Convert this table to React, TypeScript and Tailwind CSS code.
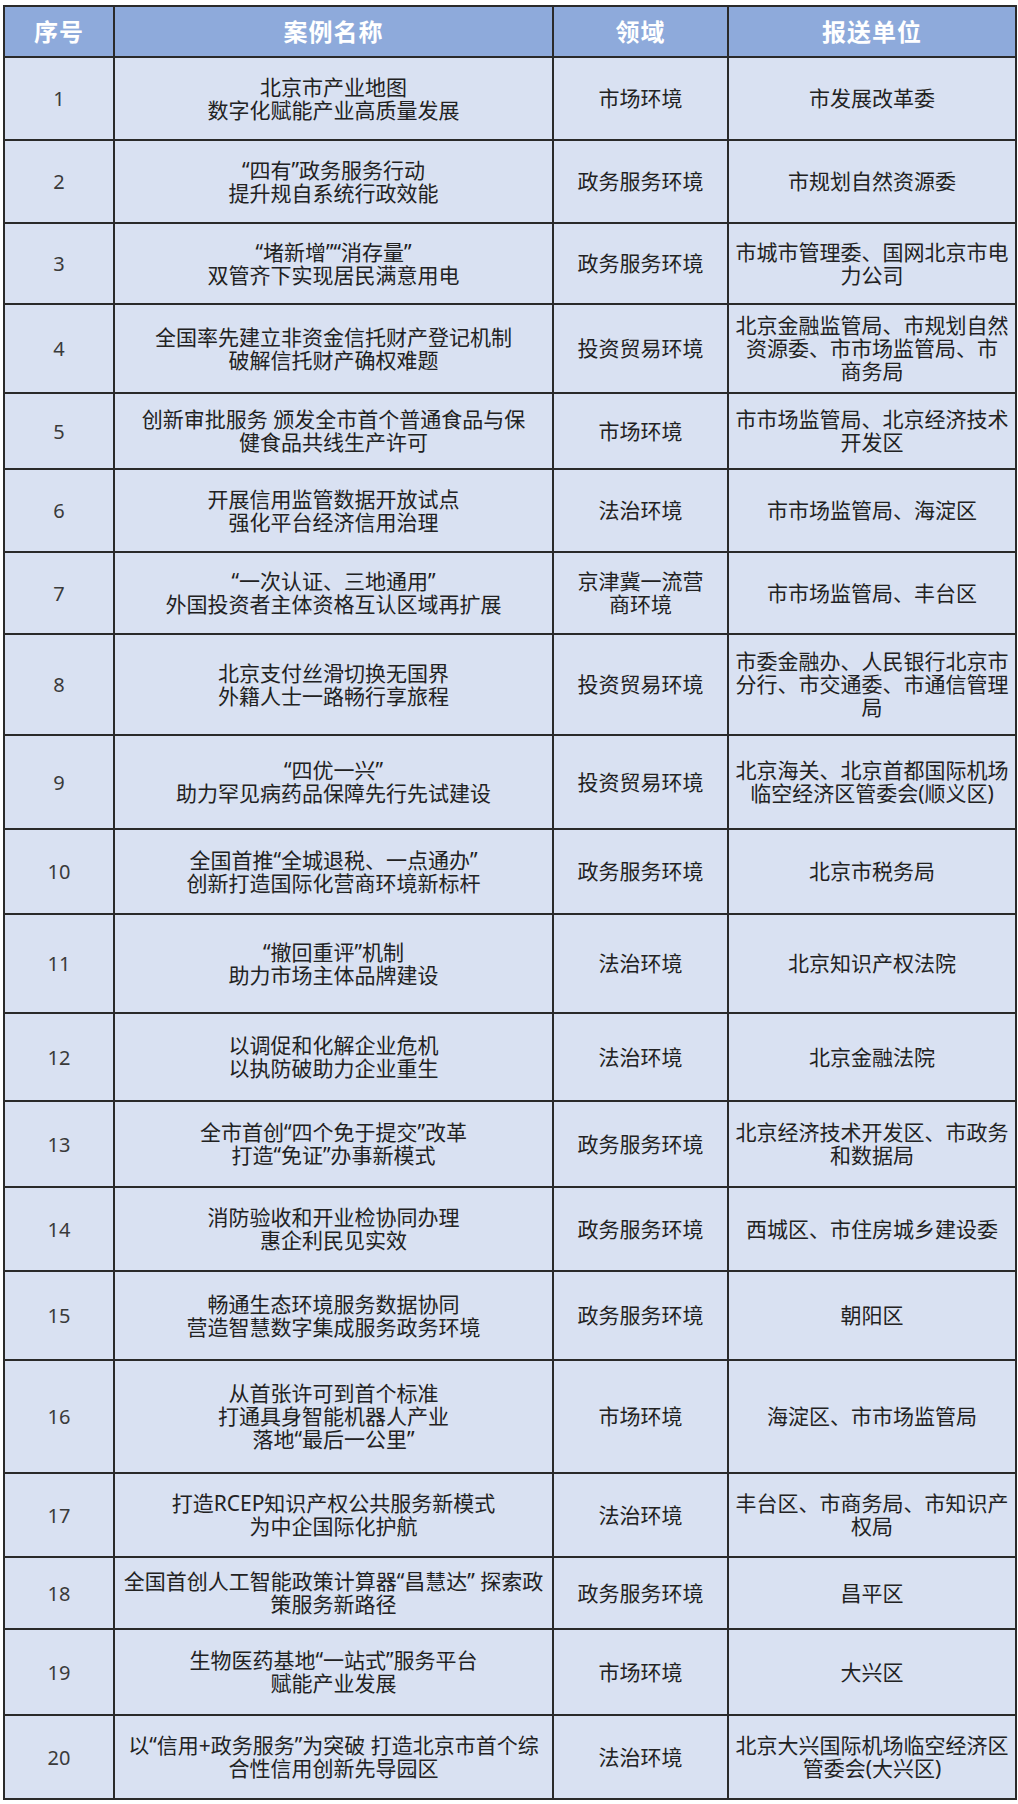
import React from "react";

type Row = {
  no: number;
  name: string[];
  field: string[];
  unit: string[];
  h: string;
};

const ROWS: Row[] = [
  { no: 1, name: ["北京市产业地图", "数字化赋能产业高质量发展"], field: ["市场环境"], unit: ["市发展改革委"], h: "h-[83px]" },
  { no: 2, name: ["“四有”政务服务行动", "提升规自系统行政效能"], field: ["政务服务环境"], unit: ["市规划自然资源委"], h: "h-[83px]" },
  { no: 3, name: ["“堵新增”“消存量”", "双管齐下实现居民满意用电"], field: ["政务服务环境"], unit: ["市城市管理委、国网北京市电", "力公司"], h: "h-[81px]" },
  { no: 4, name: ["全国率先建立非资金信托财产登记机制", "破解信托财产确权难题"], field: ["投资贸易环境"], unit: ["北京金融监管局、市规划自然", "资源委、市市场监管局、市", "商务局"], h: "h-[89px]" },
  { no: 5, name: ["创新审批服务 颁发全市首个普通食品与保", "健食品共线生产许可"], field: ["市场环境"], unit: ["市市场监管局、北京经济技术", "开发区"], h: "h-[76px]" },
  { no: 6, name: ["开展信用监管数据开放试点", "强化平台经济信用治理"], field: ["法治环境"], unit: ["市市场监管局、海淀区"], h: "h-[83px]" },
  { no: 7, name: ["“一次认证、三地通用”", "外国投资者主体资格互认区域再扩展"], field: ["京津冀一流营", "商环境"], unit: ["市市场监管局、丰台区"], h: "h-[82px]" },
  { no: 8, name: ["北京支付丝滑切换无国界", "外籍人士一路畅行享旅程"], field: ["投资贸易环境"], unit: ["市委金融办、人民银行北京市", "分行、市交通委、市通信管理", "局"], h: "h-[101px]" },
  { no: 9, name: ["“四优一兴”", "助力罕见病药品保障先行先试建设"], field: ["投资贸易环境"], unit: ["北京海关、北京首都国际机场", "临空经济区管委会(顺义区)"], h: "h-[94px]" },
  { no: 10, name: ["全国首推“全城退税、一点通办”", "创新打造国际化营商环境新标杆"], field: ["政务服务环境"], unit: ["北京市税务局"], h: "h-[85px]" },
  { no: 11, name: ["“撤回重评”机制", "助力市场主体品牌建设"], field: ["法治环境"], unit: ["北京知识产权法院"], h: "h-[99px]" },
  { no: 12, name: ["以调促和化解企业危机", "以执防破助力企业重生"], field: ["法治环境"], unit: ["北京金融法院"], h: "h-[88px]" },
  { no: 13, name: ["全市首创“四个免于提交”改革", "打造“免证”办事新模式"], field: ["政务服务环境"], unit: ["北京经济技术开发区、市政务", "和数据局"], h: "h-[86px]" },
  { no: 14, name: ["消防验收和开业检协同办理", "惠企利民见实效"], field: ["政务服务环境"], unit: ["西城区、市住房城乡建设委"], h: "h-[84px]" },
  { no: 15, name: ["畅通生态环境服务数据协同", "营造智慧数字集成服务政务环境"], field: ["政务服务环境"], unit: ["朝阳区"], h: "h-[89px]" },
  { no: 16, name: ["从首张许可到首个标准", "打通具身智能机器人产业", "落地“最后一公里”"], field: ["市场环境"], unit: ["海淀区、市市场监管局"], h: "h-[113px]" },
  { no: 17, name: ["打造RCEP知识产权公共服务新模式", "为中企国际化护航"], field: ["法治环境"], unit: ["丰台区、市商务局、市知识产", "权局"], h: "h-[84px]" },
  { no: 18, name: ["全国首创人工智能政策计算器“昌慧达” 探索政", "策服务新路径"], field: ["政务服务环境"], unit: ["昌平区"], h: "h-[72px]" },
  { no: 19, name: ["生物医药基地“一站式”服务平台", "赋能产业发展"], field: ["市场环境"], unit: ["大兴区"], h: "h-[86px]" },
  { no: 20, name: ["以“信用+政务服务”为突破 打造北京市首个综", "合性信用创新先导园区"], field: ["法治环境"], unit: ["北京大兴国际机场临空经济区", "管委会(大兴区)"], h: "h-[84px]" },
];

const HEADERS = ["序号", "案例名称", "领域", "报送单位"];

// each line is kept as given, the cells never wrap on their own
function Lines({ lines }: { lines: string[] }) {
  return (
    <>
      {lines.map((l, i) => (
        <div key={i} className="whitespace-nowrap">
          {l}
        </div>
      ))}
    </>
  );
}

export default function App() {
  const cell = "border-2 border-[#2a2a2a] text-center align-middle p-0";

  return (
    <div className="min-h-[1804px] w-[1018px] bg-white pt-[5px] pl-[3px] font-['Noto_Sans','Noto_Sans_CJK_SC',sans-serif]">
      <table className="table-fixed border-collapse w-[1012px] bg-[#d9e1f2]">
        <colgroup>
          <col className="w-[110px]" />
          <col className="w-[439px]" />
          <col className="w-[175px]" />
          <col className="w-[288px]" />
        </colgroup>
        <thead>
          <tr className="h-[51px] bg-[#8eaadb]">
            {HEADERS.map((h) => (
              <th key={h} className={`${cell} text-white text-[24px] font-bold leading-[28px] tracking-[1px]`}>
                {h}
              </th>
            ))}
          </tr>
        </thead>
        <tbody className="text-[#222] text-[21px] leading-[23px]">
          {ROWS.map((r) => (
            <tr key={r.no} className={r.h}>
              <td className={`${cell} text-[#3a3a3a] text-[20px]`}>{r.no}</td>
              <td className={`${cell} overflow-visible`}>
                <Lines lines={r.name} />
              </td>
              <td className={cell}>
                <Lines lines={r.field} />
              </td>
              <td className={cell}>
                <Lines lines={r.unit} />
              </td>
            </tr>
          ))}
        </tbody>
      </table>
    </div>
  );
}
